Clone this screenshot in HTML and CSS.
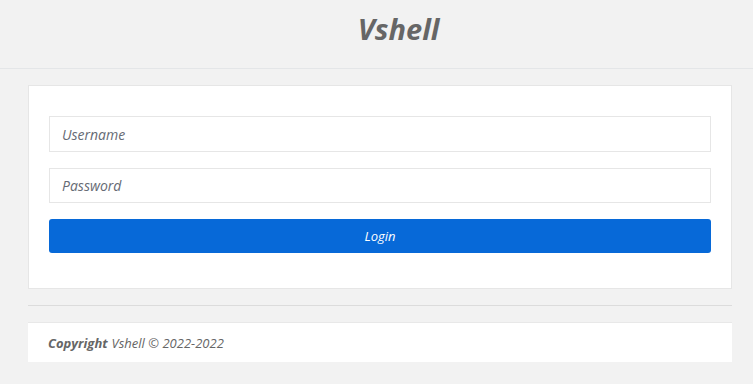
FILE: index.html
```html
<!DOCTYPE html>
<html lang="en">
  <head>
    <meta charset="UTF-8" />
    <meta name="viewport" content="width=device-width, initial-scale=1.0" />
    <title>Vshell</title>
    <link rel="stylesheet" href="styles.css">
  </head>
  <body>
    <header class="top">
      <h1 class="brand">Vshell</h1>
    </header>

    <div class="wrap">
      <!-- Login Form -->
      <form class="card">
        <input type="text" class="field" placeholder="Username" />
        <input type="password" class="field pass" placeholder="Password" />
        <button type="button" class="login">Login</button>
      </form>

      <hr class="rule" />

      <footer class="foot">
        <b>Copyright</b> Vshell &copy; 2022-2022
      </footer>
    </div>
  </body>
</html>
```

FILE: styles.css
```css
body {
  font-family: "Open Sans", Arial, sans-serif;
  font-style: italic;
  margin: 0;
  background-color: #f2f2f2;
  color: #666;
}
.top {
  height: 68px;
  border-bottom: 1px solid #e4e6e8;
  display: flex;
  align-items: center;
  justify-content: center;
  padding-left: 44px;
}
.brand {
  margin: 0;
  font-size: 29px;
  font-weight: 700;
  color: #666;
  line-height: 1;
  padding-bottom: 11px;
}
.wrap {
  padding: 16px 21px 0 28px;
}
.card {
  background-color: #fff;
  border: 1px solid #e6e6e6;
  padding: 30px 20px 35px 20px;
  display: flex;
  flex-direction: column;
  gap: 16px;
}
.field {
  height: 36px;
  box-sizing: border-box;
  border: 1px solid #e6e6e6;
  padding: 0 12px;
  font-family: inherit;
  font-style: italic;
  font-size: 14px;
  color: #555;
  outline: none;
}
.pass {
  height: 35px;
}
.field::placeholder {
  color: #666a74;
}
.login {
  height: 34px;
  border: none;
  border-radius: 3px;
  background-color: #0769d8;
  color: #fff;
  font-family: inherit;
  font-style: italic;
  font-size: 13px;
  cursor: pointer;
}
.rule {
  border: none;
  border-top: 1px solid #dcdcdc;
  margin: 16px 0;
}
.foot {
  background-color: #fff;
  border-top: 1px solid #e8e8e8;
  height: 39px;
  padding: 0 20px;
  display: flex;
  align-items: center;
  gap: 4px;
  font-size: 13px;
  color: #666;
}
```
